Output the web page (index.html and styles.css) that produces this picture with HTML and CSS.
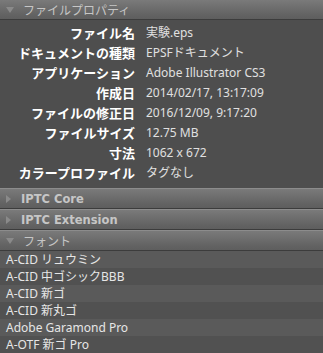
FILE: index.html
```html
<!DOCTYPE html>
<html lang="ja">
<head>
    <meta charset="UTF-8">
    <title>メタデータ</title>
    <link rel="stylesheet" href="styles.css">
</head>
<body>
    <div class="panel">
        <div class="section-head open first">
            <span class="arrow"></span>ファイルプロパティ
        </div>
        <div class="props">
            <div class="prop"><span class="label">ファイル名</span><span class="value">実験.eps</span></div>
            <div class="prop"><span class="label">ドキュメントの種類</span><span class="value">EPSFドキュメント</span></div>
            <div class="prop"><span class="label">アプリケーション</span><span class="value">Adobe Illustrator CS3</span></div>
            <div class="prop"><span class="label">作成日</span><span class="value">2014/02/17, 13:17:09</span></div>
            <div class="prop"><span class="label">ファイルの修正日</span><span class="value">2016/12/09, 9:17:20</span></div>
            <div class="prop"><span class="label">ファイルサイズ</span><span class="value">12.75 MB</span></div>
            <div class="prop"><span class="label">寸法</span><span class="value">1062 x 672</span></div>
            <div class="prop"><span class="label">カラープロファイル</span><span class="value">タグなし</span></div>
        </div>
        <div class="section-head latin">
            <span class="arrow"></span>IPTC Core
        </div>
        <div class="section-head latin">
            <span class="arrow"></span>IPTC Extension
        </div>
        <div class="section-head open">
            <span class="arrow"></span>フォント
        </div>
        <ul class="fonts">
            <li>A-CID リュウミン</li>
            <li>A-CID 中ゴシックBBB</li>
            <li>A-CID 新ゴ</li>
            <li>A-CID 新丸ゴ</li>
            <li>Adobe Garamond Pro</li>
            <li>A-OTF 新ゴ Pro</li>
        </ul>
    </div>
</body>
</html>
```

FILE: styles.css
```css
body {
    margin: 0;
    padding: 0;
    background-color: #4e4e4e;
    font-family: "Noto Sans", "Noto Sans CJK JP", sans-serif;
    font-size: 12px;
    color: #e2e2e2;
}
.panel {
    width: 323px;
    height: 353px;
    overflow: hidden;
}
.section-head {
    display: flex;
    align-items: center;
    height: 19px;
    padding-left: 6px;
    border-top: 1px solid #8c8c8c;
    border-bottom: 1px solid #3c3c3c;
    background: linear-gradient(#7a7a7a, #626262 80%, #5e5e5e);
    color: #c6c6c6;
    font-size: 12px;
}
.section-head.first {
    height: 19px;
    border-top: none;
}
.section-head.latin {
    font-family: "DejaVu Sans", sans-serif;
    font-weight: bold;
    font-size: 11.5px;
}
.arrow {
    width: 0;
    height: 0;
    margin-right: 10px;
    border-left: 5px solid #8a8a8a;
    border-top: 4px solid transparent;
    border-bottom: 4px solid transparent;
}
.open .arrow {
    border-top: 6px solid #8a8a8a;
    border-left: 4px solid transparent;
    border-right: 4px solid transparent;
    border-bottom: none;
    margin-right: 9px;
}
.props {
    padding: 2px 0 6px;
}
.prop {
    display: flex;
    height: 20px;
    align-items: center;
}
.label {
    width: 135px;
    text-align: right;
    color: #ffffff;
    font-weight: bold;
    font-size: 13px;
    white-space: nowrap;
}
.value {
    margin-left: 11px;
    color: #e0e0e0;
    white-space: nowrap;
}
.fonts {
    list-style: none;
    margin: 0;
    padding: 0;
}
.fonts li {
    height: 17px;
    line-height: 17px;
    padding-left: 6px;
    background-color: #5a5a5a;
    color: #e6e6e6;
    white-space: nowrap;
}
.fonts li:nth-child(even) {
    background-color: #515151;
}
```
